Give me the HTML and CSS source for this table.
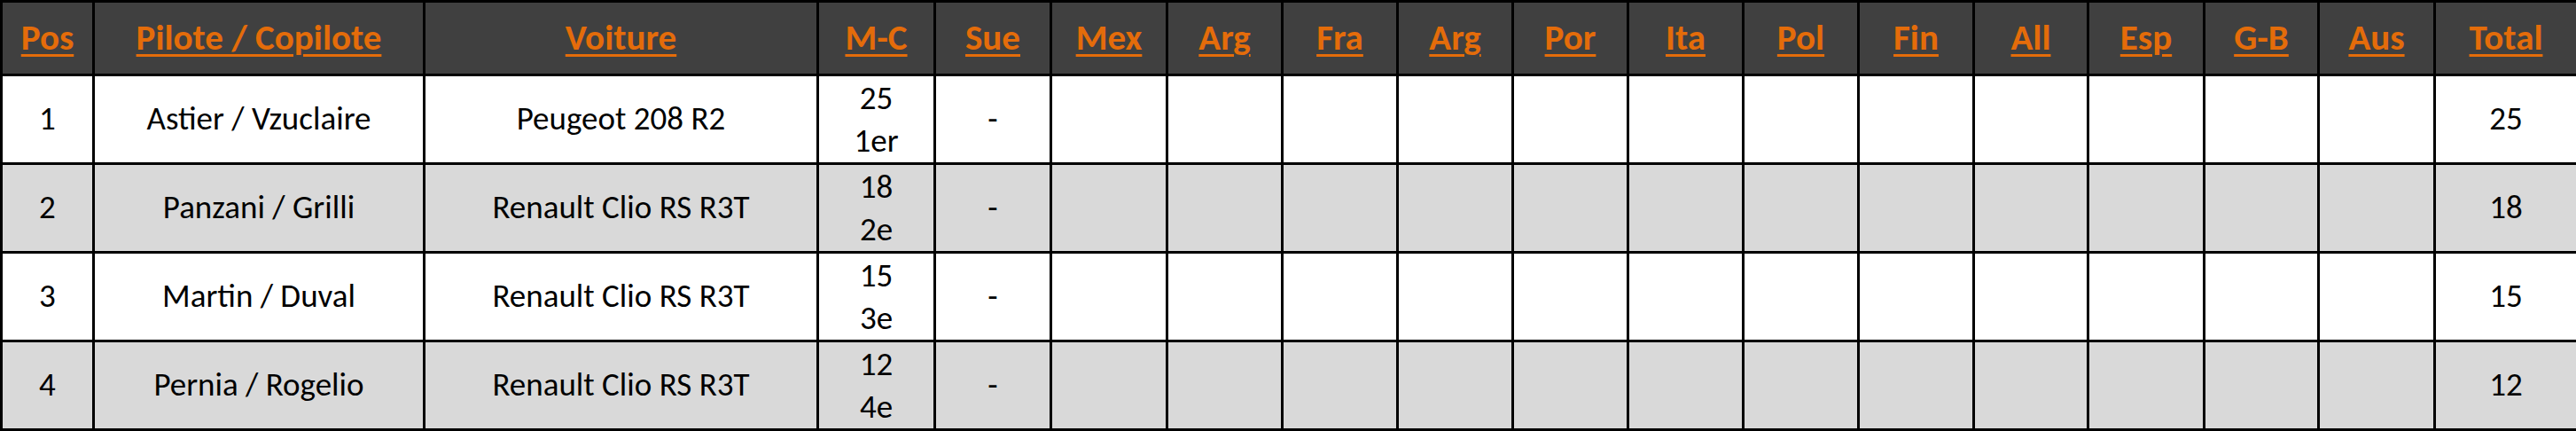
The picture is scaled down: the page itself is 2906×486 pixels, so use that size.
FILE: index.html
```html
<!DOCTYPE html>
<html lang="fr">
<head>
<meta charset="utf-8">
<title>Classement</title>
<link rel="stylesheet" href="styles.css">
</head>
<body>
<table class="standings">
  <colgroup>
    <col class="c-pos"><col class="c-pilot"><col class="c-car"><col class="c-mc">
    <col class="c-131"><col class="c-131">
    <col class="c-130"><col class="c-130"><col class="c-130"><col class="c-130"><col class="c-130"><col class="c-130"><col class="c-130">
    <col class="c-129"><col class="c-131"><col class="c-129"><col class="c-131">
    <col class="c-total">
  </colgroup>
  <thead>
    <tr>
      <th><a href="#">Pos</a></th>
      <th><a href="#">Pilote / Copilote</a></th>
      <th><a href="#">Voiture</a></th>
      <th><a href="#">M-C</a></th>
      <th><a href="#">Sue</a></th>
      <th><a href="#">Mex</a></th>
      <th><a href="#">Arg</a></th>
      <th><a href="#">Fra</a></th>
      <th><a href="#">Arg</a></th>
      <th><a href="#">Por</a></th>
      <th><a href="#">Ita</a></th>
      <th><a href="#">Pol</a></th>
      <th><a href="#">Fin</a></th>
      <th><a href="#">All</a></th>
      <th><a href="#">Esp</a></th>
      <th><a href="#">G-B</a></th>
      <th><a href="#">Aus</a></th>
      <th><a href="#">Total</a></th>
    </tr>
  </thead>
  <tbody>
    <tr class="odd">
      <td>1</td><td>Astier / Vzuclaire</td><td>Peugeot 208 R2</td>
      <td class="mc">25<br>1er</td><td>-</td>
      <td></td><td></td><td></td><td></td><td></td><td></td><td></td><td></td><td></td><td></td><td></td><td></td>
      <td>25</td>
    </tr>
    <tr class="even">
      <td>2</td><td>Panzani / Grilli</td><td>Renault Clio RS R3T</td>
      <td class="mc">18<br>2e</td><td>-</td>
      <td></td><td></td><td></td><td></td><td></td><td></td><td></td><td></td><td></td><td></td><td></td><td></td>
      <td>18</td>
    </tr>
    <tr class="odd">
      <td>3</td><td>Martin / Duval</td><td>Renault Clio RS R3T</td>
      <td class="mc">15<br>3e</td><td>-</td>
      <td></td><td></td><td></td><td></td><td></td><td></td><td></td><td></td><td></td><td></td><td></td><td></td>
      <td>15</td>
    </tr>
    <tr class="even">
      <td>4</td><td>Pernia / Rogelio</td><td>Renault Clio RS R3T</td>
      <td class="mc">12<br>4e</td><td>-</td>
      <td></td><td></td><td></td><td></td><td></td><td></td><td></td><td></td><td></td><td></td><td></td><td></td>
      <td>12</td>
    </tr>
  </tbody>
</table>
</body>
</html>
```

FILE: styles.css
```css
html, body {
  margin: 0;
  padding: 0;
  background: #ffffff;
}

.standings {
  border-collapse: separate;
  border-spacing: 3px;
  background: #000000;
  table-layout: fixed;
  width: 2906px;
  font-family: Carlito, "Open Sans", "Liberation Sans", sans-serif;
  color: #000000;
}

.c-pos { width: 101px; }
.c-pilot { width: 370px; }
.c-car { width: 441px; }
.c-mc { width: 129px; }
.c-131 { width: 128px; }
.c-130 { width: 127px; }
.c-129 { width: 126px; }
.c-total { width: 158px; }

.standings th,
.standings td {
  padding: 0;
  text-align: center;
  vertical-align: middle;
  overflow: hidden;
  white-space: nowrap;
}

.standings th {
  height: 80px;
  background: #404040;
  font-size: 41px;
  font-weight: 700;
  line-height: 1.2;
}

.standings th a {
  color: #e46c0a;
  text-decoration: underline;
  text-decoration-thickness: 3px;
  text-underline-offset: 5px;
}

.standings td {
  height: 97px;
  font-size: 37px;
  line-height: 1.2;
}

.standings td.mc {
  line-height: 48px;
}

.standings tr.odd td { background: #ffffff; }
.standings tr.even td { background: #d9d9d9; }
```
